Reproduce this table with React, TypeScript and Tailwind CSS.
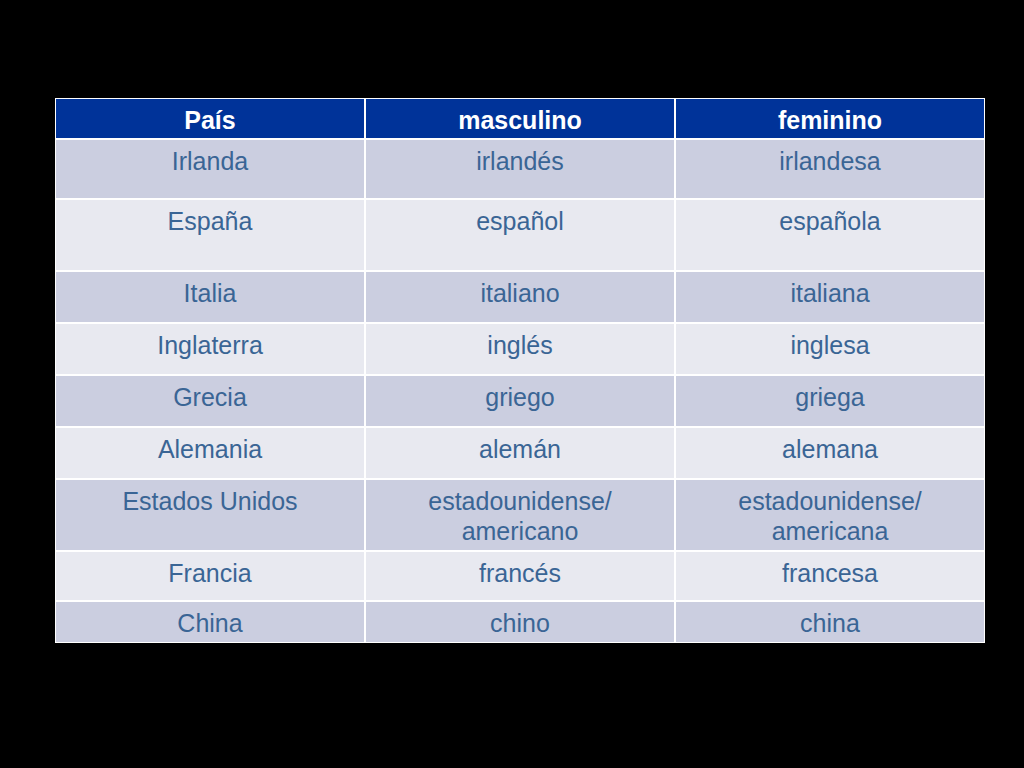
const rows: { h: string; bg: string; cells: string[][] }[] = [
  { h: 'h-[58px]', bg: 'bg-[#cbcee0]', cells: [['Irlanda'], ['irlandés'], ['irlandesa']] },
  { h: 'h-[70px]', bg: 'bg-[#e8e9f0]', cells: [['España'], ['español'], ['española']] },
  { h: 'h-[50px]', bg: 'bg-[#cbcee0]', cells: [['Italia'], ['italiano'], ['italiana']] },
  { h: 'h-[50px]', bg: 'bg-[#e8e9f0]', cells: [['Inglaterra'], ['inglés'], ['inglesa']] },
  { h: 'h-[50px]', bg: 'bg-[#cbcee0]', cells: [['Grecia'], ['griego'], ['griega']] },
  { h: 'h-[50px]', bg: 'bg-[#e8e9f0]', cells: [['Alemania'], ['alemán'], ['alemana']] },
  {
    h: 'h-[70px]',
    bg: 'bg-[#cbcee0]',
    cells: [['Estados Unidos'], ['estadounidense/', 'americano'], ['estadounidense/', 'americana']],
  },
  { h: 'h-[48px]', bg: 'bg-[#e8e9f0]', cells: [['Francia'], ['francés'], ['francesa']] },
  { h: 'h-[40px]', bg: 'bg-[#cbcee0]', cells: [['China'], ['chino'], ['china']] },
];

export default function App() {
  return (
    <div
      className="w-[1024px] h-[768px] bg-black pt-[98px] pl-[55px]"
      style={{ fontFamily: '"Liberation Sans", Arial, sans-serif' }}
    >
      <div className="w-[930px] bg-white p-[1px] grid grid-cols-[308px_308px_308px] gap-[2px]">
        {['País', 'masculino', 'feminino'].map((t) => (
          <div
            key={t}
            className="h-[39px] bg-[#003399] text-white font-bold text-[25px] leading-[30px] flex items-center justify-center pt-[2px]"
          >
            {t}
          </div>
        ))}
        {rows.map((r, i) =>
          r.cells.map((lines, j) => (
            <div
              key={i + '-' + j}
              className={`${r.h} ${r.bg} text-[#3a6595] text-[25px] leading-[30px] pt-[6px] text-center`}
            >
              {lines.map((l) => (
                <div key={l}>{l}</div>
              ))}
            </div>
          ))
        )}
      </div>
    </div>
  );
}
